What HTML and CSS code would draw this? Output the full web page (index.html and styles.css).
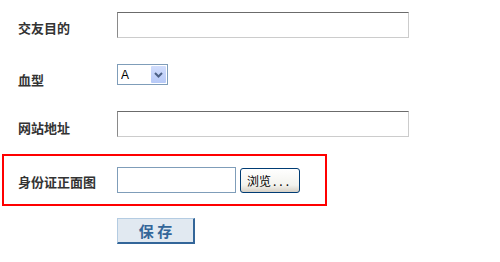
FILE: index.html
```html
<!DOCTYPE html>
<html lang="zh">
<head>
<meta charset="utf-8">
<link rel="stylesheet" href="styles.css">
</head>
<body>
<form class="form">
  <div class="row row-1">
    <label class="label">交友目的</label>
    <input class="text-input" type="text">
  </div>
  <div class="row row-2">
    <label class="label">血型</label>
    <span class="select-wrap">
      <select class="select"><option>A</option></select>
      <span class="select-arrow">
        <svg width="9" height="6" viewBox="0 0 9 6"><path d="M1 1 L4.5 4.5 L8 1" fill="none" stroke="#4d6185" stroke-width="2"/></svg>
      </span>
    </span>
  </div>
  <div class="row row-3">
    <label class="label">网站地址</label>
    <input class="text-input" type="text">
  </div>
  <div class="row row-4 highlight">
    <label class="label">身份证正面图</label>
    <span class="file-field"></span>
    <button type="button" class="browse">浏览<span class="dots">...</span></button>
  </div>
  <div class="row row-5">
    <span class="label"></span>
    <button type="button" class="save">保 存</button>
  </div>
</form>
</body>
</html>
```
FILE: styles.css
```css
html, body {
  margin: 0;
  padding: 0;
  background: #ffffff;
}
body {
  font-family: "Noto Sans CJK SC", "Liberation Sans", sans-serif;
  font-size: 12px;
  color: #333333;
}
.form {
  display: flex;
  flex-direction: column;
}
.row {
  display: flex;
  align-items: center;
  padding-left: 18px;
}
.row-1 { height: 50px; }
.row-2 { height: 49px; }
.row-3 { height: 50px; }
.row-5 { height: 50px; }
.label {
  box-sizing: border-box;
  width: 99px;
  flex: none;
  font-weight: bold;
  font-size: 13px;
  color: #333333;
  line-height: 15px;
}
.row-1 .label { padding-top: 5px; }
.row-2 .label { padding-top: 9px; }
.row-3 .label { padding-top: 7px; }
.row-4 .label { padding-top: 3px; }
.text-input {
  box-sizing: border-box;
  width: 292px;
  height: 26px;
  margin: 0;
  padding: 0 3px;
  border-top: 1px solid #6b6b6b;
  border-left: 1px solid #8a8a8a;
  border-right: 1px solid #cccccc;
  border-bottom: 1px solid #cccccc;
  background: #ffffff;
  outline: none;
}
.select-wrap {
  position: relative;
  display: inline-block;
  width: 51px;
  height: 21px;
}
.select {
  appearance: none;
  -webkit-appearance: none;
  box-sizing: border-box;
  width: 51px;
  height: 21px;
  margin: 0;
  padding: 0 0 0 3px;
  border: 1px solid #7f9db9;
  border-radius: 0;
  background: #ffffff;
  font-family: "Liberation Sans", sans-serif;
  font-size: 12px;
  color: #000000;
  outline: none;
}
.select-arrow {
  position: absolute;
  top: 2px;
  right: 2px;
  width: 15px;
  height: 17px;
  display: flex;
  align-items: center;
  justify-content: center;
  background: linear-gradient(#d1ddfc, #b7c9f7);
  border-radius: 1px;
  pointer-events: none;
}
.highlight {
  box-sizing: border-box;
  width: 325px;
  height: 52px;
  margin-top: 5px;
  margin-left: 2px;
  padding-left: 14px;
  border: 2px solid #ff0000;
}
.file-field {
  box-sizing: border-box;
  display: inline-block;
  width: 119px;
  height: 26px;
  border: 1px solid #7f9db9;
  background: #ffffff;
}
.browse {
  box-sizing: border-box;
  width: 60px;
  height: 25px;
  margin: 1px 0 0 4px;
  padding: 0 0 0 6px;
  text-align: left;
  border: 1px solid #003c74;
  border-radius: 3px;
  background: linear-gradient(#ffffff, #f3f3ee 70%, #d6d0c5);
  font-family: "Noto Sans CJK SC", sans-serif;
  font-size: 12px;
  color: #000000;
}
.dots {
  letter-spacing: 3px;
  padding-left: 2px;
}
.save {
  box-sizing: border-box;
  width: 78px;
  height: 26px;
  margin: 0;
  padding: 0;
  border-top: 1px solid #b4cce2;
  border-left: 1px solid #b4cce2;
  border-right: 2px solid #336699;
  border-bottom: 2px solid #336699;
  background: #e1e9f1;
  font-family: "Noto Sans CJK SC", sans-serif;
  font-size: 15px;
  font-weight: bold;
  color: #336699;
  line-height: 20px;
}
```
